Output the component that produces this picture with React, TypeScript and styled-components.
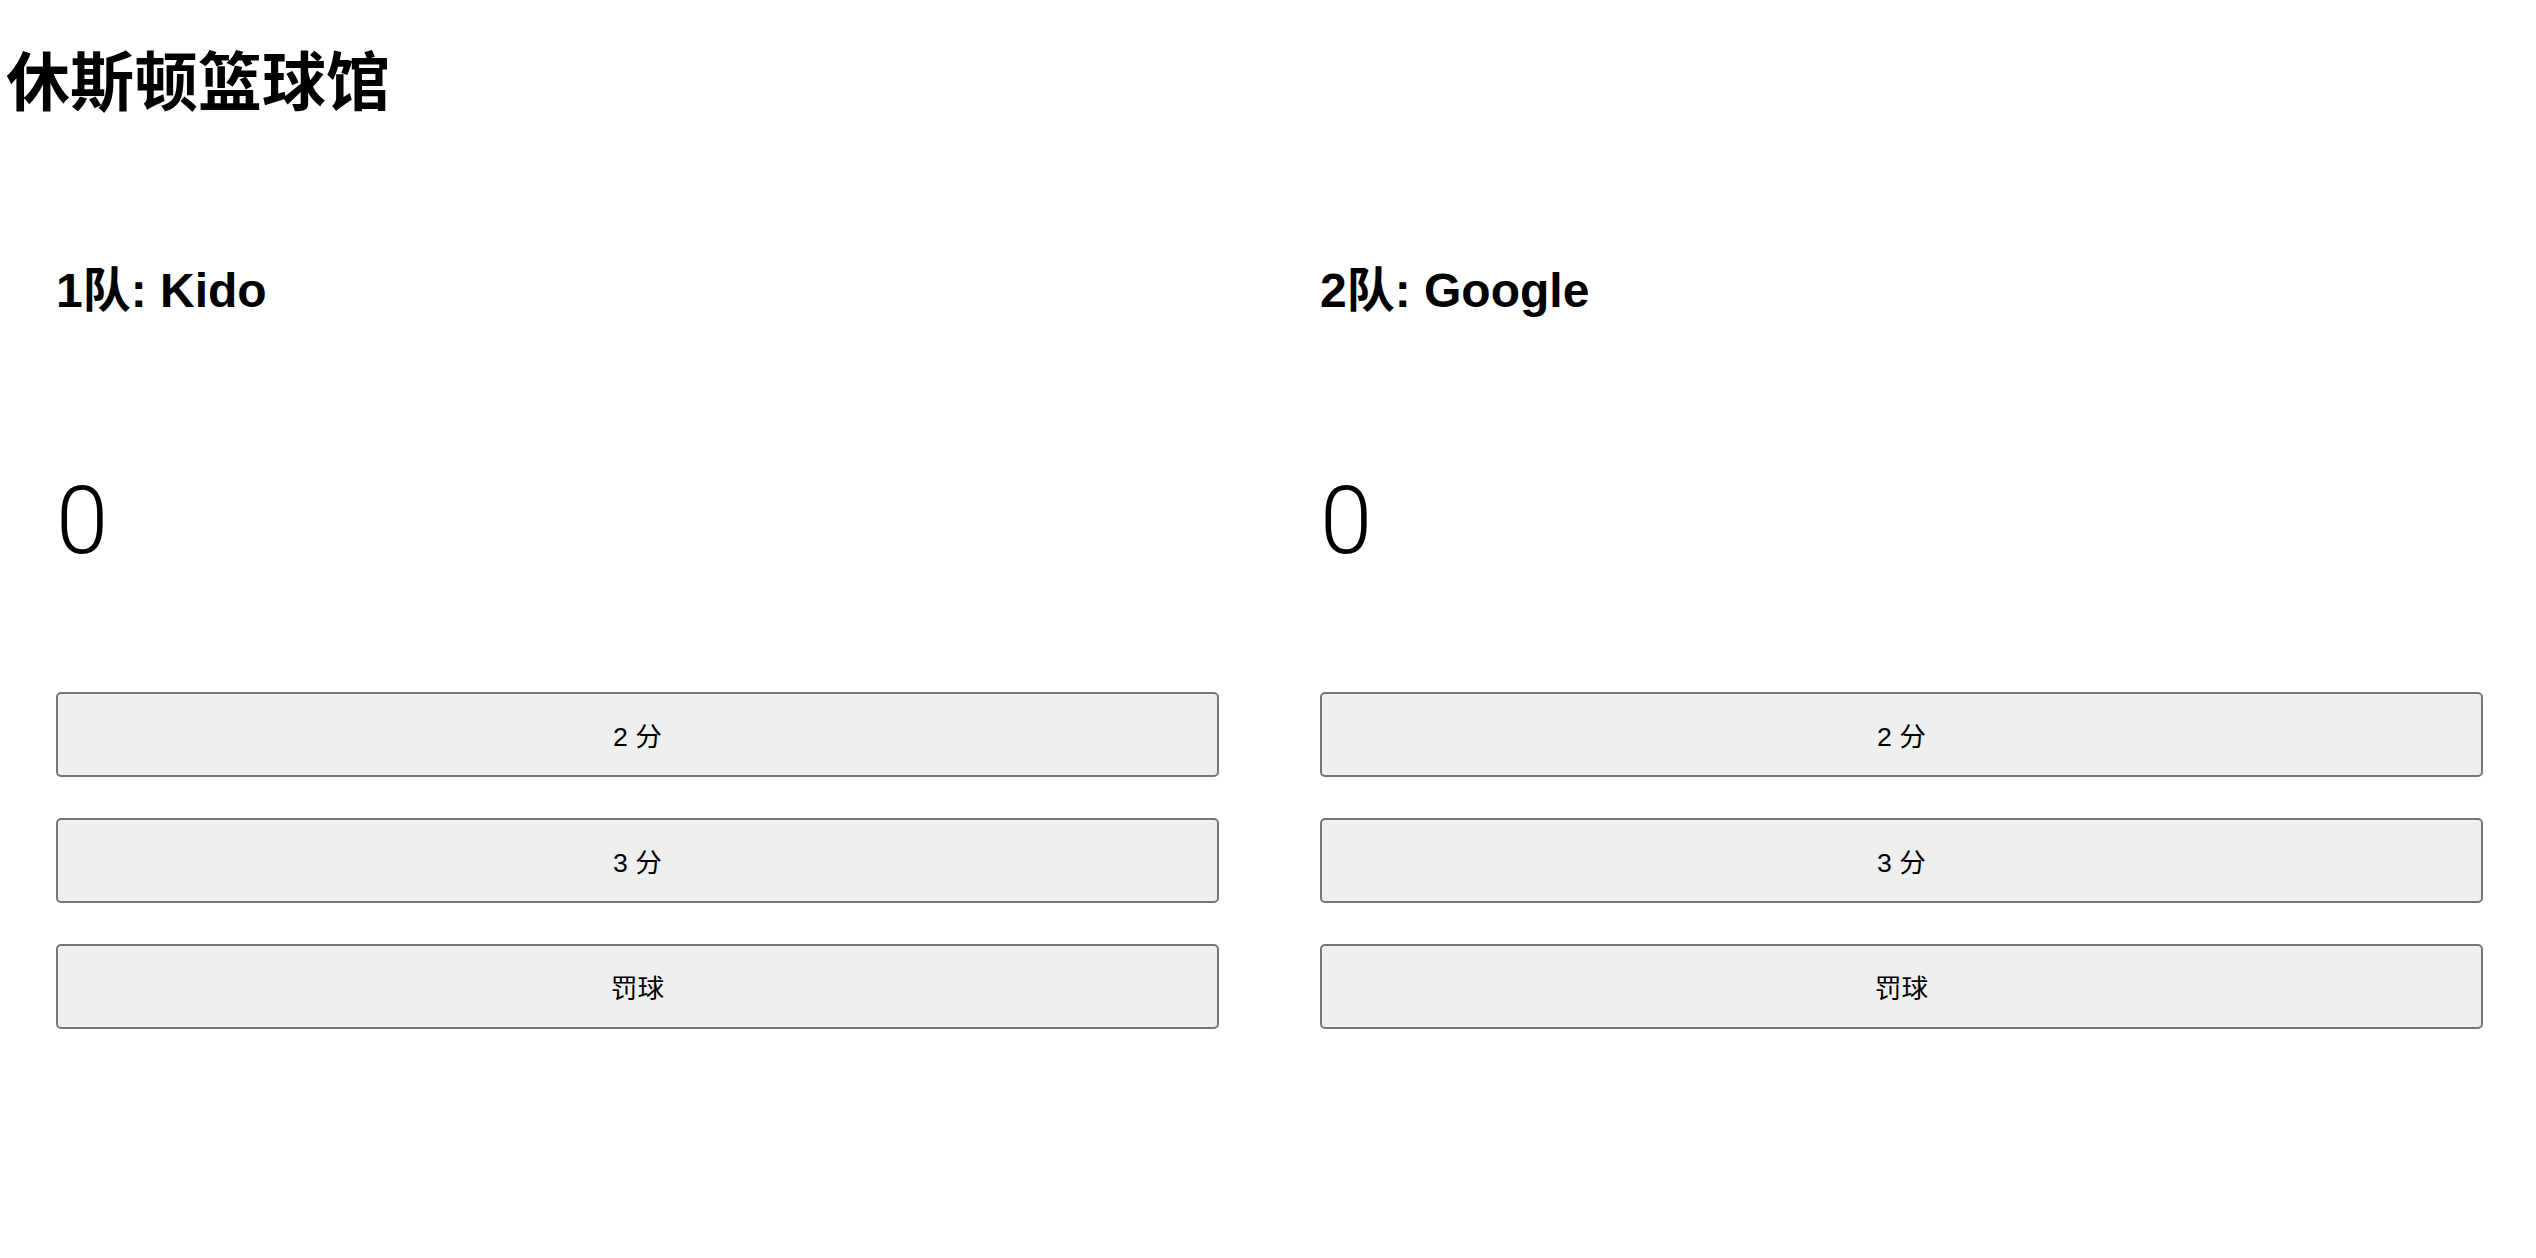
import React, { useState } from 'react'
import styled, { createGlobalStyle } from 'styled-components'

const GlobalStyle = createGlobalStyle`
  html, body {
    margin: 0;
    padding: 0;
    background: #fff;
  }
  body {
    font-family: "Liberation Sans", "Noto Sans CJK SC", sans-serif;
    color: #000;
  }
`

const Title = styled.h1`
  margin: 45px 0 0 6px;
  font-family: "Noto Sans CJK SC", sans-serif;
  font-size: 64px;
  line-height: 64px;
  font-weight: 700;
`

const Board = styled.div`
  display: grid;
  grid-template-columns: 1163px 1163px;
  column-gap: 101px;
  padding-left: 56px;
  margin-top: 158px;
`

const Team = styled.section`
  display: flex;
  flex-direction: column;
`

const TeamName = styled.h2`
  margin: 0;
  font-size: 48px;
  line-height: 48px;
  font-weight: 700;
`

const Score = styled.div`
  margin: 159px 0 0 0;
  font-family: Roboto, "Liberation Sans", sans-serif;
  font-weight: 300;
  font-size: 94px;
  line-height: 1;
`

const Actions = styled.div`
  display: flex;
  flex-direction: column;
  gap: 41px;
  margin-top: 124px;
`

const ScoreButton = styled.button`
  box-sizing: border-box;
  width: 100%;
  height: 85px;
  padding: 0;
  border: 2px solid #767676;
  border-radius: 5px;
  background: #efefef;
  color: #000;
  font-family: "Liberation Sans", "Noto Sans CJK SC", sans-serif;
  font-size: 26.67px;
  cursor: pointer;
`

type TeamInfo = { label: string; name: string }

const teams: TeamInfo[] = [
  { label: '1队', name: 'Kido' },
  { label: '2队', name: 'Google' },
]

// 每个按钮加的分数
const shots = [
  { text: '2 分', points: 2 },
  { text: '3 分', points: 3 },
  { text: '罚球', points: 1 },
]

function TeamPanel({ team }: { team: TeamInfo }) {
  const [score, setScore] = useState(0)

  return (
    <Team>
      <TeamName>{team.label}: {team.name}</TeamName>
      <Score>{score}</Score>
      <Actions>
        {shots.map(s => (
          <ScoreButton key={s.text} onClick={() => setScore(score + s.points)}>
            {s.text}
          </ScoreButton>
        ))}
      </Actions>
    </Team>
  )
}

export default function App() {
  return (
    <>
      <GlobalStyle />
      <Title>休斯顿篮球馆</Title>
      <Board>
        {teams.map(t => (
          <TeamPanel key={t.label} team={t} />
        ))}
      </Board>
    </>
  )
}
